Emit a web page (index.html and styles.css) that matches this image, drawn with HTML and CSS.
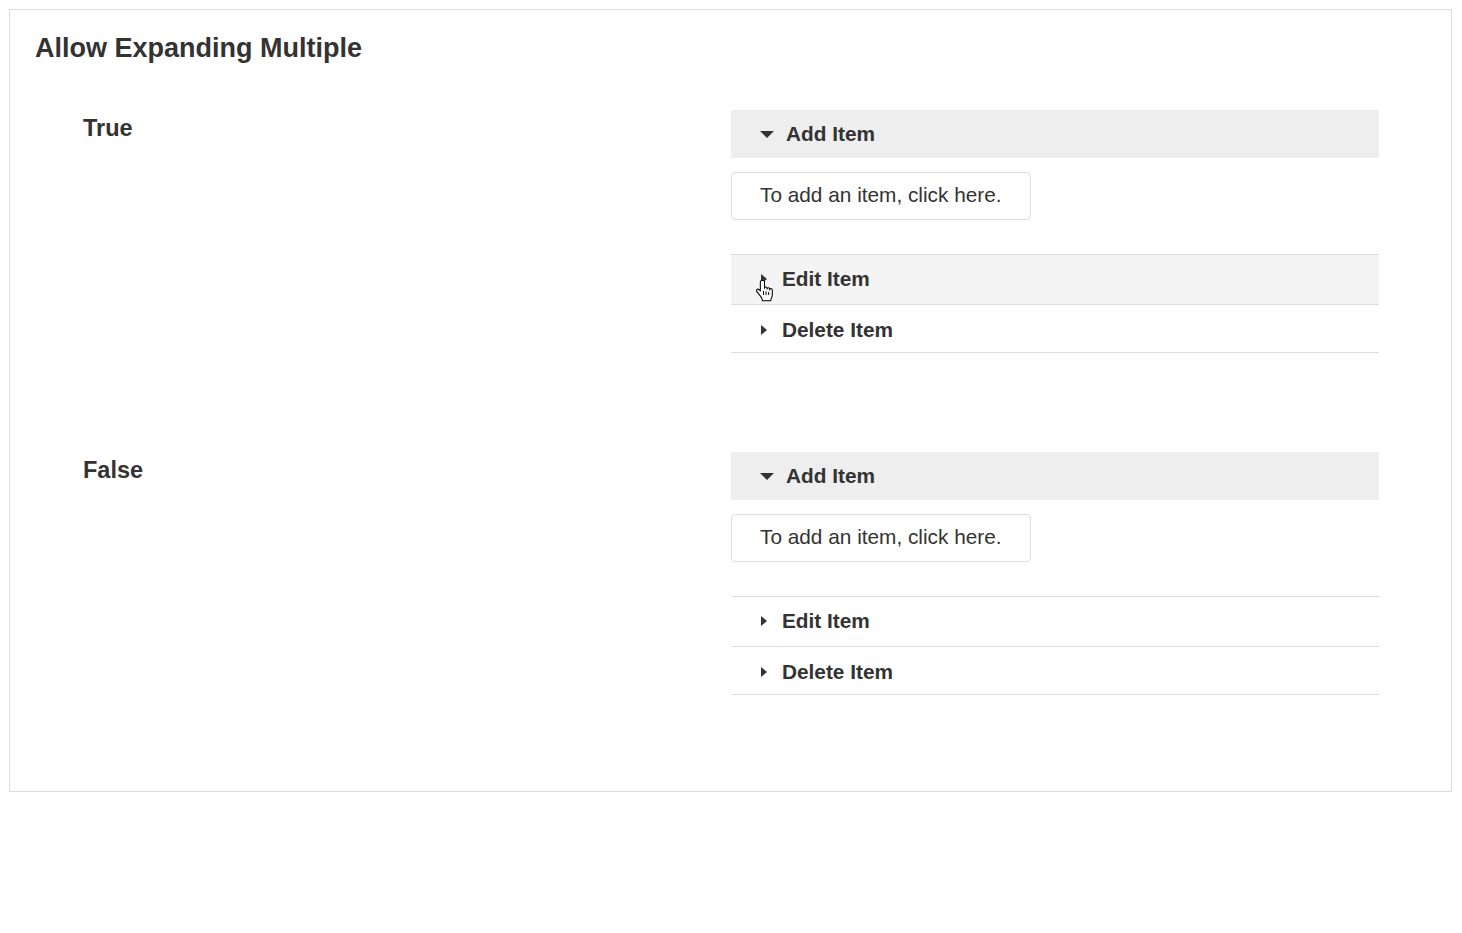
FILE: index.html
```html
<!DOCTYPE html>
<html>
<head>
<meta charset="utf-8">
<link rel="stylesheet" href="styles.css">
</head>
<body>
<div class="card">
  <h2 class="title">Allow Expanding Multiple</h2>
  <div class="rows">
    <div class="row">
      <div class="label">True</div>
      <div class="acc">
        <div class="head open"><span class="caret-down"></span>Add Item</div>
        <div class="box">To add an item, click here.</div>
        <div class="item first hover"><span class="caret-right"></span>Edit Item
          <svg class="cursor" width="19" height="26" viewBox="0 0 18 25"><path d="M6.5 1.5c-.8 0-1.5.7-1.5 1.5v8.5l-1.2-1.3c-.6-.6-1.6-.6-2.1 0-.5.5-.5 1.3 0 1.9l3.8 4.9c.9 1.2 1.5 2.5 1.5 4h8c0-1.3.5-2.5 1-3.5.4-.9.5-1.9.5-2.9v-4c0-.8-.6-1.4-1.300-1.4-.7 0-1.2.6-1.2 1.3v-.7c0-.8-.6-1.4-1.3-1.4-.7 0-1.2.6-1.2 1.3v-.6c0-.8-.6-1.4-1.3-1.4-.7 0-1.2.6-1.2 1.3V3c0-.8-.7-1.5-1.5-1.5z" fill="#fff" stroke="#000" stroke-width="1" stroke-linejoin="round"/><path d="M10.5 12v3.5M13 12.5v3M8 11.5v4" stroke="#000" stroke-width="1"/></svg>
        </div>
        <div class="item second"><span class="caret-right"></span>Delete Item</div>
      </div>
    </div>
    <div class="row">
      <div class="label">False</div>
      <div class="acc">
        <div class="head open"><span class="caret-down"></span>Add Item</div>
        <div class="box">To add an item, click here.</div>
        <div class="item first"><span class="caret-right"></span>Edit Item</div>
        <div class="item second"><span class="caret-right"></span>Delete Item</div>
      </div>
    </div>
  </div>
</div>
</body>
</html>
```
FILE: styles.css
```css
html, body {
  background: #fff;
}
body {
  margin: 9px 10px 0 9px;
  font-family: "Liberation Sans", Arial, sans-serif;
  color: #333;
}
.card {
  border: 1px solid #dcdcdc;
  padding: 23px 72px 96px 25px;
}
.title {
  margin: 0;
  font-size: 27px;
  font-weight: bold;
  line-height: 31px;
}
.rows {
  margin-top: 46px;
  padding-left: 48px;
  display: flex;
  flex-direction: column;
  gap: 99px;
}
.row {
  display: grid;
  grid-template-columns: 1fr 1fr;
}
.label {
  font-size: 23.5px;
  font-weight: bold;
  line-height: 27px;
  padding-top: 5px;
}
.acc {
  display: flex;
  flex-direction: column;
}
.head {
  height: 48px;
  background: #eee;
  display: flex;
  align-items: center;
  padding-left: 29px;
  font-size: 20.8px;
  font-weight: bold;
}
.caret-down {
  width: 0;
  height: 0;
  border-left: 7px solid transparent;
  border-right: 7px solid transparent;
  border-top: 7px solid #333;
  margin-right: 12px;
}
.box {
  margin-top: 14px;
  width: 300px;
  height: 48px;
  box-sizing: border-box;
  border: 1px solid #ddd;
  border-radius: 4px;
  padding-left: 28px;
  padding-bottom: 2px;
  display: flex;
  align-items: center;
  font-size: 20.8px;
}
.item {
  position: relative;
  display: flex;
  align-items: center;
  padding-left: 30px;
  font-size: 20.8px;
  font-weight: bold;
  border-bottom: 1px solid #ddd;
  box-sizing: border-box;
}
.item.first {
  margin-top: 34px;
  border-top: 1px solid #ddd;
  height: 51px;
  padding-bottom: 2px;
}
.item.second {
  height: 48px;
  padding-top: 2px;
}
.item.hover {
  background: #f4f4f4;
}
.caret-right {
  width: 0;
  height: 0;
  border-top: 5px solid transparent;
  border-bottom: 5px solid transparent;
  border-left: 6px solid #333;
  margin-right: 15px;
}
.cursor {
  position: absolute;
  left: 24px;
  top: 24px;
}
```
